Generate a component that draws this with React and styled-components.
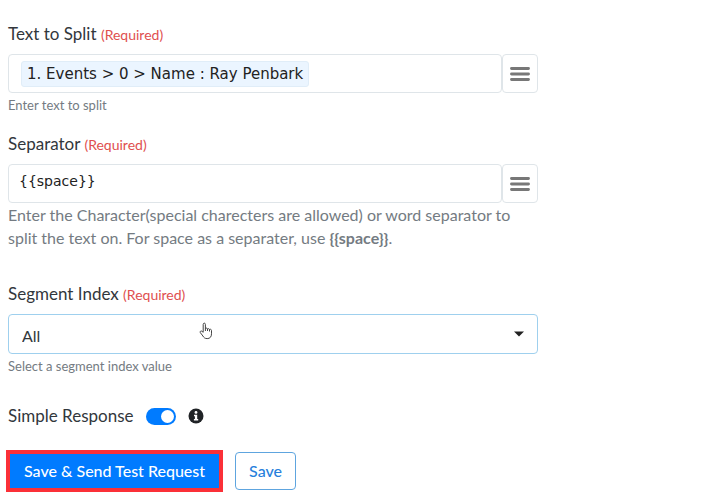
import React, { useState } from 'react';
import styled, { createGlobalStyle } from 'styled-components';

const GlobalStyle = createGlobalStyle`
	* {
		box-sizing: border-box;
	}

	body {
		margin: 0;
		background-color: #fff;
		color: #32373c;
		font-family: Lato, "Liberation Sans", sans-serif;
		font-size: 16px;
		line-height: 24px;
	}
`;

const Form = styled.form`
	width: 100%;
	max-width: 546px;
	padding: 22px 8px 8px;
`;

const Field = styled.div`
	margin-bottom: ${({ $gap }) => $gap}px;
`;

const Label = styled.label`
	display: block;
	margin-bottom: 8px;
	font-size: 17px;
	line-height: 23px;
`;

const Required = styled.span`
	color: #e04f4f;
	font-size: 14px;
`;

const InputGroup = styled.div`
	display: flex;
`;

const TokenBox = styled.div`
	display: flex;
	flex: 1;
	align-items: center;
	min-width: 0;
	height: 39px;
	padding: 0 12px;
	border: 1px solid #dfe5e9;
	border-radius: 4px;
`;

const Token = styled.span`
	flex: none;
	padding: 0 5px;
	border: 1px solid #e0edf8;
	border-radius: 3px;
	background-color: #ebf5ff;
	color: #222;
	font-family: "DejaVu Sans", sans-serif;
	font-size: 15px;
`;

const TokenInput = styled.input`
	flex: 1;
	min-width: 0;
	border: none;
	outline: none;
	background: transparent;
	font-family: "DejaVu Sans", sans-serif;
	font-size: 15px;
`;

const TextInput = styled.input`
	flex: 1;
	min-width: 0;
	height: 39px;
	padding: 0 10px 6px;
	border: 1px solid #dfe5e9;
	border-radius: 4px;
	color: #222;
	font-family: "DejaVu Sans", sans-serif;
	font-size: 14px;
`;

const MenuButton = styled.button`
	display: flex;
	align-items: center;
	justify-content: center;
	width: 36px;
	height: 39px;
	padding: 0;
	border: 1px solid #dfe5e9;
	border-radius: 4px;
	background-color: #fff;
`;

const Help = styled.small`
	display: block;
	padding-top: 2px;
	color: #747b82;
	font-size: 13px;
	line-height: 20px;
`;

const Description = styled.p`
	margin: 0;
	color: #747b82;
	font-size: 16px;
	line-height: 23px;
`;

const SelectBox = styled.div`
	position: relative;
`;

const Select = styled.select`
	display: block;
	width: 100%;
	height: 40px;
	padding: 2px 40px 0 13px;
	border: 1px solid #9fd0ee;
	border-radius: 4px;
	outline: none;
	appearance: none;
	background-color: #fff;
	color: #32373c;
	font-family: inherit;
	font-size: 16px;
`;

const Caret = styled.svg`
	position: absolute;
	top: 17px;
	right: 14px;
	pointer-events: none;
`;

const Pointer = styled.svg`
	position: absolute;
	top: 8px;
	left: 191px;
	pointer-events: none;
`;

const ToggleRow = styled.div`
	display: flex;
	align-items: center;
	gap: 12px;
	margin: 28px 0 24px;
`;

const ToggleLabel = styled.label`
	font-size: 17px;
	line-height: 24px;
`;

const Switch = styled.input`
	display: flex;
	align-items: center;
	width: 30px;
	height: 17px;
	margin: 0;
	padding: 0 2px;
	border-radius: 9px;
	appearance: none;
	background-color: #adb5bd;

	&::before {
		content: "";
		width: 13px;
		height: 13px;
		border-radius: 50%;
		background-color: #fff;
	}

	&:checked {
		justify-content: flex-end;
		background-color: #007bff;
	}
`;

const Actions = styled.div`
	display: flex;
	align-items: center;
	gap: 14px;
`;

const Button = styled.button`
	height: 38px;
	padding: 0 ${({ $primary }) => ($primary ? 15 : 13)}px 2px;
	border: 1px solid ${({ $primary }) => ($primary ? '#007bff' : '#5ea5df')};
	border-radius: ${({ $primary }) => ($primary ? 0 : 4)}px;
	outline: ${({ $primary }) => ($primary ? '4px solid #fb3038' : 'none')};
	outline-offset: -2px;
	background-color: ${({ $primary }) => ($primary ? '#007bff' : '#fff')};
	color: ${({ $primary }) => ($primary ? '#fff' : '#287fdc')};
	font-family: inherit;
	font-size: 16px;
	font-weight: 500;
`;

const MenuIcon = () => (
	<svg width="20" height="16" viewBox="0 0 20 16" aria-hidden="true">
		<path d="M1.5 2.5h17M1.5 8h17M1.5 13.5h17" stroke="#777" strokeWidth="2.9" strokeLinecap="round" />
	</svg>
);

const InfoIcon = () => (
	<svg width="16" height="16" viewBox="0 0 16 16" role="img" aria-label="info">
		<circle cx="8" cy="8" r="7.5" fill="#202326" />
		<circle cx="8" cy="4.4" r="1.4" fill="#fff" />
		<path d="M6 6.8h3.2v4.2h1v1.4H5.9V11h1V8.2H6z" fill="#fff" />
	</svg>
);

const App = () => {
	const [separator, setSeparator] = useState('{{space}}');
	const [segment, setSegment] = useState('All');
	const [simple, setSimple] = useState(true);

	return (
		<>
			<GlobalStyle />
			<Form onSubmit={(e) => e.preventDefault()}>
				<Field $gap={17}>
					<Label htmlFor="text">Text to Split <Required>(Required)</Required></Label>
					<InputGroup>
						<TokenBox>
							<Token>1. Events &gt; 0 &gt; Name : Ray Penbark</Token>
							<TokenInput id="text" type="text" />
						</TokenBox>
						<MenuButton type="button" aria-label="Insert value"><MenuIcon /></MenuButton>
					</InputGroup>
					<Help>Enter text to split</Help>
				</Field>

				<Field $gap={33}>
					<Label htmlFor="separator">Separator <Required>(Required)</Required></Label>
					<InputGroup>
						<TextInput
							id="separator"
							type="text"
							value={separator}
							onChange={(e) => setSeparator(e.target.value)}
						/>
						<MenuButton type="button" aria-label="Insert value"><MenuIcon /></MenuButton>
					</InputGroup>
					<Description>
						Enter the Character(special charecters are allowed) or word separator to
						split the text on. For space as a separater, use <b>{'{{space}}'}</b>.
					</Description>
				</Field>

				<Field $gap={0}>
					<Label htmlFor="segment">Segment Index <Required>(Required)</Required></Label>
					<SelectBox>
						<Select id="segment" value={segment} onChange={(e) => setSegment(e.target.value)}>
							<option>All</option>
						</Select>
						<Caret width="10" height="6" viewBox="0 0 10 6" aria-hidden="true">
							<path d="M0 .5h10L5 5.5z" fill="#222" />
						</Caret>
						<Pointer width="15" height="18" viewBox="0 0 15 18" aria-hidden="true">
							<path
								d="M4.2 10.3V2.4c0-1.7 2.2-1.7 2.2 0v4.4c.2-1 1.9-1 2.1.3.4-.8 1.9-.6 2 .5.6-.7 2-.3 2 .9v3.3c0 3-1.5 4.8-4.3 4.8-2.3 0-3.3-.9-4.3-2.6L1.3 10.6c-.7-1.2.8-2.1 1.7-1.3z"
								fill="#fff"
								stroke="#444"
								strokeLinejoin="round"
							/>
							<path d="M6.4 6.5v2.5M8.5 7v2M10.5 7.5v2" stroke="#444" />
						</Pointer>
					</SelectBox>
					<Help>Select a segment index value</Help>
				</Field>

				<ToggleRow>
					<ToggleLabel htmlFor="simple">Simple Response</ToggleLabel>
					<Switch
						id="simple"
						type="checkbox"
						role="switch"
						checked={simple}
						onChange={(e) => setSimple(e.target.checked)}
					/>
					<InfoIcon />
				</ToggleRow>

				<Actions>
					<Button type="submit" $primary>Save &amp; Send Test Request</Button>
					<Button type="button">Save</Button>
				</Actions>
			</Form>
		</>
	);
};

export default App;
